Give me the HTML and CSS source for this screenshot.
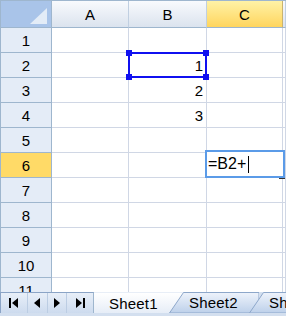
FILE: index.html
```html
<!DOCTYPE html>
<html lang="en">
<head>
    <meta charset="UTF-8">
    <title>Sheet</title>
    <link rel="stylesheet" href="styles.css">
</head>
<body>
    <div class="book">
        <div class="sheet">
            <div class="row head-row">
                <div class="corner"><svg width="51" height="26"><polygon points="29,23 46,23 46,7" fill="#e3ecf7"/></svg></div>
                <div class="col-head">A</div>
                <div class="col-head">B</div>
                <div class="col-head col-active">C</div>
                <div class="col-head"></div>
            </div>
            <div class="row"><div class="row-head">1</div><div class="cell"></div><div class="cell"></div><div class="cell"></div><div class="cell"></div></div>
            <div class="row"><div class="row-head">2</div><div class="cell"></div><div class="cell num">1</div><div class="cell"></div><div class="cell"></div></div>
            <div class="row"><div class="row-head">3</div><div class="cell"></div><div class="cell num">2</div><div class="cell"></div><div class="cell"></div></div>
            <div class="row"><div class="row-head">4</div><div class="cell"></div><div class="cell num">3</div><div class="cell"></div><div class="cell"></div></div>
            <div class="row"><div class="row-head">5</div><div class="cell"></div><div class="cell"></div><div class="cell"></div><div class="cell"></div></div>
            <div class="row"><div class="row-head row-active">6</div><div class="cell"></div><div class="cell"></div><div class="cell"></div><div class="cell"></div></div>
            <div class="row"><div class="row-head">7</div><div class="cell"></div><div class="cell"></div><div class="cell"></div><div class="cell"></div></div>
            <div class="row"><div class="row-head">8</div><div class="cell"></div><div class="cell"></div><div class="cell"></div><div class="cell"></div></div>
            <div class="row"><div class="row-head">9</div><div class="cell"></div><div class="cell"></div><div class="cell"></div><div class="cell"></div></div>
            <div class="row"><div class="row-head">10</div><div class="cell"></div><div class="cell"></div><div class="cell"></div><div class="cell"></div></div>
            <div class="row"><div class="row-head">11</div><div class="cell"></div><div class="cell"></div><div class="cell"></div><div class="cell"></div></div>

            <!-- selection on B2 -->
            <div class="selection">
                <span class="handle tl"></span><span class="handle tr"></span>
                <span class="handle bl"></span><span class="handle br"></span>
            </div>

            <!-- editor on C6 -->
            <div class="editor">=B2+<span class="caret"></span></div>
        </div>

        <div class="tabbar">
            <div class="nav">
                <div class="nav-btn wide"><svg width="9" height="10"><rect x="0" y="0" width="2" height="10" fill="#000"/><polygon points="9,0 9,10 3,5" fill="#000"/></svg></div>
                <div class="nav-btn"><svg width="6" height="10"><polygon points="6,0 6,10 0,5" fill="#000"/></svg></div>
                <div class="nav-btn"><svg width="6" height="10"><polygon points="0,0 0,10 6,5" fill="#000"/></svg></div>
                <div class="nav-btn wide last"><svg width="9" height="10"><polygon points="0,0 0,10 6,5" fill="#000"/><rect x="7" y="0" width="2" height="10" fill="#000"/></svg></div>
            </div>
            <div class="tabs">
                <div class="tab active"><span>Sheet1</span></div>
                <div class="tab back">
                    <svg class="tab-shape" width="90" height="21"><polygon points="0.5,21 14.5,0.5 90,0.5 90,21" fill="url(#tabfill)" stroke="#8da7ca"/>
                        <defs><linearGradient id="tabfill" x1="0" y1="0" x2="0" y2="1"><stop offset="0" stop-color="#eef3fb"/><stop offset="1" stop-color="#bdd0ea"/></linearGradient></defs></svg>
                    <span>Sheet2</span>
                </div>
                <div class="tab back">
                    <svg class="tab-shape" width="90" height="21"><polygon points="0.5,21 14.5,0.5 90,0.5 90,21" fill="url(#tabfill)" stroke="#8da7ca"/></svg>
                    <span>Sheet3</span>
                </div>
            </div>
        </div>
    </div>
</body>
</html>
```

FILE: styles.css
```css
body {
    margin: 0;
    font-family: "Liberation Sans", Arial, sans-serif;
    font-size: 15px;
    color: #000;
    background: #fff;
}

.book {
    width: 286px;
    height: 316px;
    overflow: hidden;
}

.sheet {
    position: relative;
    height: 292px;
    overflow: hidden;
    border-top: 1px solid #9eb6ce;
    border-left: 1px solid #9eb6ce;
    box-sizing: border-box;
}

.row {
    display: grid;
    grid-template-columns: 51px 77px 78px 76px 1fr;
    height: 25px;
}

.head-row {
    height: 27px;
}

.corner {
    background: #a9c4e9;
    border-right: 1px solid #9eb6ce;
    border-bottom: 1px solid #9eb6ce;
}

.corner svg {
    display: block;
}

.col-head {
    background: linear-gradient(#f8fafd, #dbe3ee);
    border-right: 1px solid #c0cfe1;
    border-bottom: 1px solid #9eb6ce;
    display: flex;
    align-items: center;
    justify-content: center;
}

.col-active {
    background: linear-gradient(#fff2a6, #ffd55e);
    border-right-color: #c9b370;
}

.row-head {
    background: #e4ecf7;
    border-right: 1px solid #9eb6ce;
    border-bottom: 1px solid #9eb6ce;
    display: flex;
    align-items: center;
    justify-content: center;
}

.row-active {
    background: #ffda67;
}

.cell {
    border-right: 1px solid #d0d7e5;
    border-bottom: 1px solid #d0d7e5;
    display: flex;
    align-items: center;
}

.num {
    justify-content: flex-end;
    padding-right: 3px;
}

.selection {
    position: absolute;
    left: 127px;
    top: 51px;
    width: 79px;
    height: 26px;
    border: 2px solid #1010f0;
    box-sizing: border-box;
}

.handle {
    position: absolute;
    width: 6px;
    height: 6px;
    background: #1010f0;
}

.tl { left: -4px; top: -4px; }
.tr { right: -4px; top: -4px; }
.bl { left: -4px; bottom: -4px; }
.br { right: -4px; bottom: -4px; }

.editor {
    position: absolute;
    left: 204px;
    top: 149px;
    width: 80px;
    height: 28px;
    border: 2px solid #5b9be8;
    box-sizing: border-box;
    background: #fff;
    padding-left: 1px;
    font-size: 16px;
    display: flex;
    align-items: center;
}

/* small dark mark under the bottom right corner */
.editor::after {
    content: "";
    position: absolute;
    right: -2px;
    bottom: -3px;
    width: 6px;
    height: 1px;
    background: #333;
}

.caret {
    display: inline-block;
    width: 1px;
    height: 17px;
    background: #000;
    margin-left: 2px;
}

.tabbar {
    display: flex;
    height: 24px;
    background: #d3dfef;
}

.nav {
    display: flex;
    width: 94px;
    height: 21px;
    border-top: 1px solid #8ba4c6;
    border-left: 1px solid #8ba4c6;
    border-right: 1px solid #9eb6ce;
    background: linear-gradient(#e8eff8, #cddbee);
    box-sizing: border-box;
}

.nav-btn {
    width: 20px;
    display: flex;
    align-items: center;
    justify-content: center;
    border-right: 1px solid #bccde3;
}

.nav-btn svg {
    display: block;
}

.wide {
    width: 27px;
}

.last {
    border-right: none;
}

.tabs {
    display: flex;
    flex: 1;
    min-width: 0;
    height: 21px;
}

.tab {
    position: relative;
    flex: none;
    height: 21px;
    display: flex;
    align-items: center;
}

.tab span {
    position: relative;
    font-size: 15px;
    letter-spacing: 0.2px;
}

.active {
    width: 89px;
    background: linear-gradient(#ffffff, #e6edf7);
    border-top: 1px solid #e8eef7;
    box-sizing: border-box;
    padding-left: 15px;
}

.back {
    width: 90px;
    margin-left: -14px;
    padding-left: 20px;
    box-sizing: border-box;
}

.back + .back {
    margin-left: -10px;
}

.tab-shape {
    position: absolute;
    left: 0;
    top: 0;
}
```
